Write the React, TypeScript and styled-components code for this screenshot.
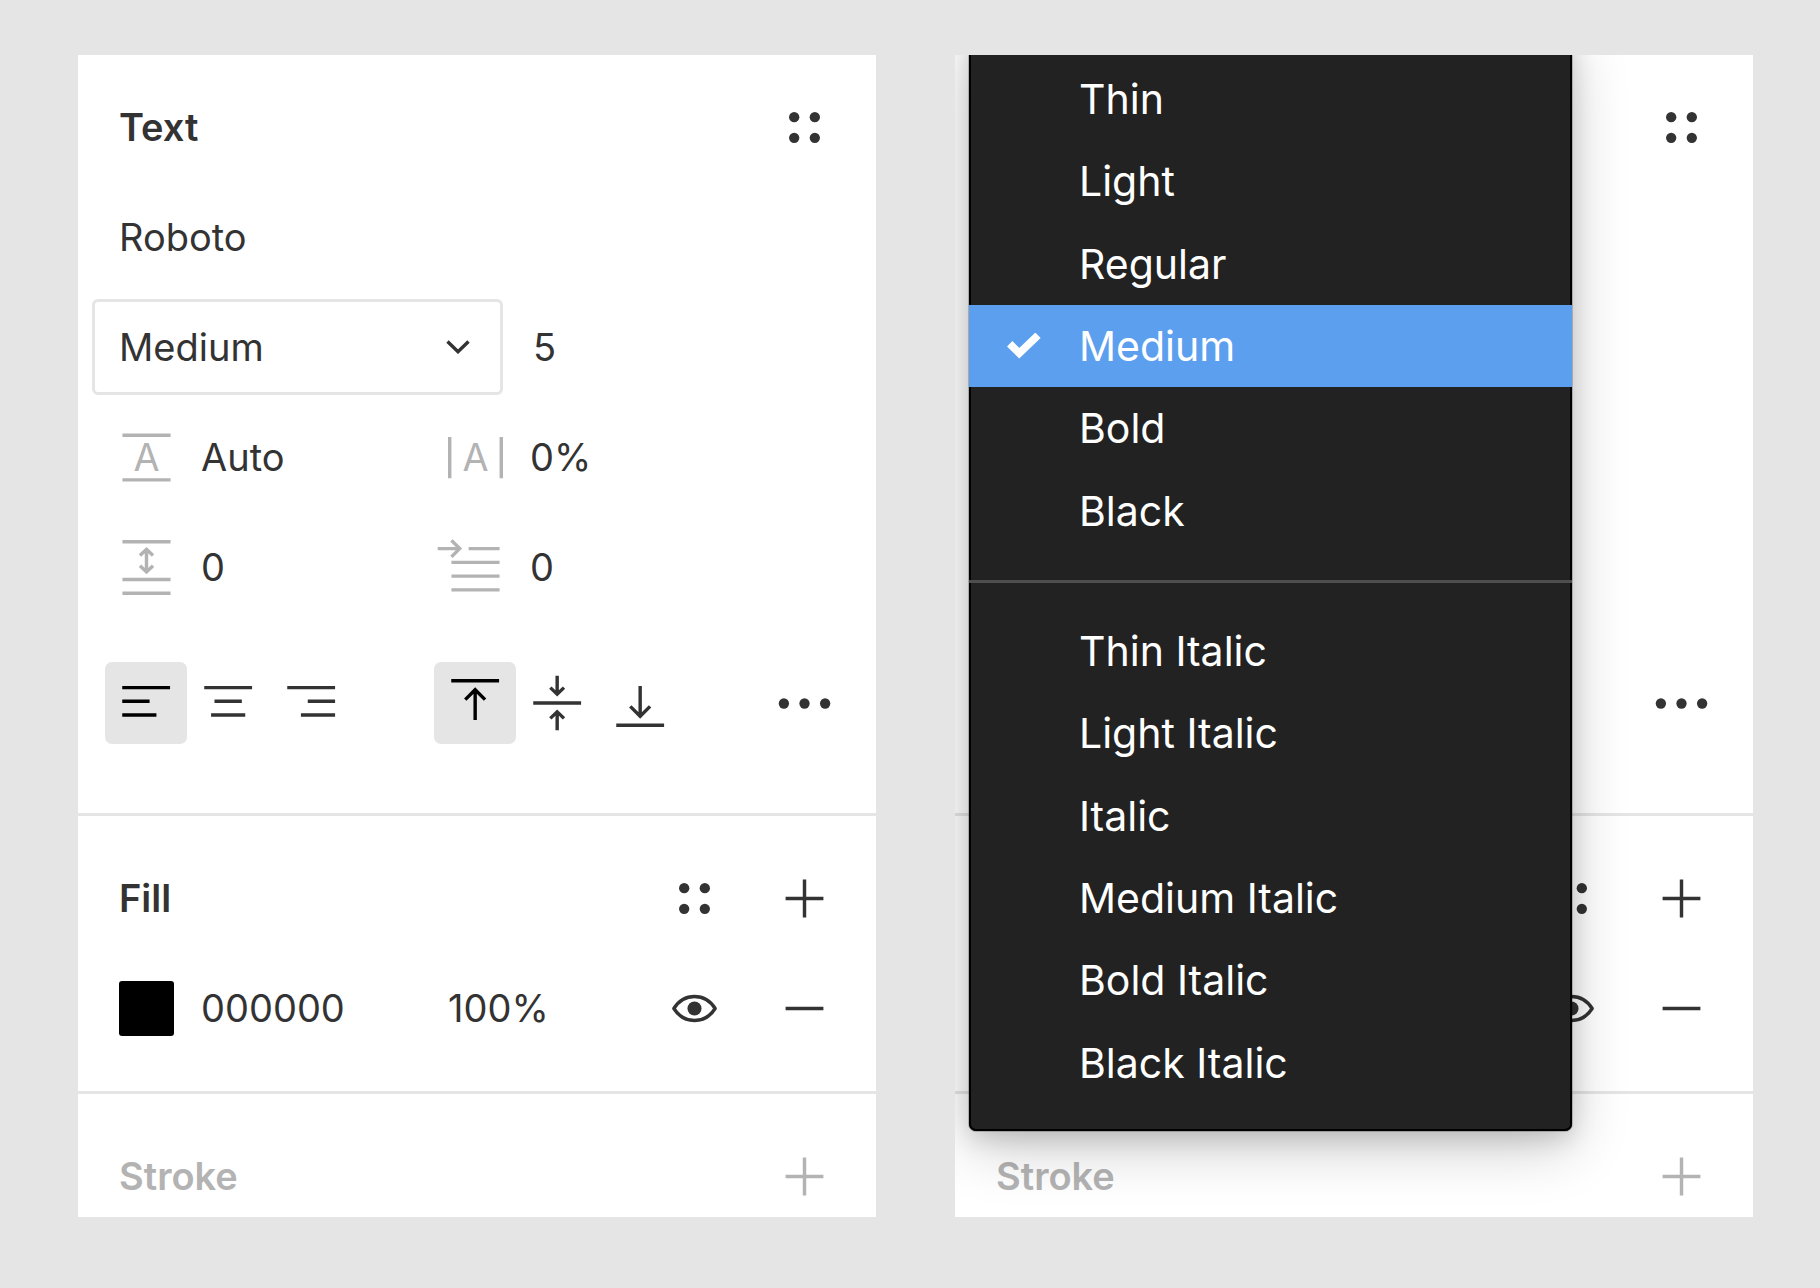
import React from "react";
import styled, { createGlobalStyle, css } from "styled-components";

const ink = "#333333";
const muted = "#b3b3b3";
const line = "#e5e5e5";

const GlobalStyle = createGlobalStyle`
  *, *::before, *::after { box-sizing: border-box; }
  body {
    margin: 0;
    background: ${line};
    color: ${ink};
    font-family: Inter, "Liberation Sans", sans-serif;
    font-size: 38px;
    line-height: 56px;
  }
  button, input, select { font: inherit; color: inherit; }
`;

const Board = styled.main`
  display: grid;
  grid-template-columns: repeat(2, minmax(0, 1fr));
  align-items: start;
  gap: 79px;
  padding: 55px 67px 71px 78px;
`;

const Panel = styled.section`
  position: relative;
  overflow: hidden;
  background: #ffffff;
`;

const Section = styled.div<{ $first?: boolean; $last?: boolean }>`
  padding: ${(p) => (p.$first ? 17 : 27)}px 17px ${(p) => (p.$first ? 55 : 28)}px 41px;
  border-bottom: 3px solid ${line};
  ${(p) =>
    p.$last &&
    css`
      padding-top: 54px;
      padding-bottom: 13px;
      border-bottom: 0;
    `}
`;

const Header = styled.header<{ $compact?: boolean }>`
  display: flex;
  align-items: center;
  height: ${(p) => (p.$compact ? 56 : 110)}px;
`;

const Title = styled.h2<{ $muted?: boolean }>`
  flex: 1;
  margin: 0;
  font-size: 38px;
  font-weight: 600;
  line-height: 56px;
  color: ${(p) => (p.$muted ? muted : ink)};
`;

const Row = styled.div`
  display: flex;
  align-items: center;
  height: 110px;
`;

const FieldRow = styled.div<{ $spaced?: boolean }>`
  display: grid;
  grid-template-columns: 329px minmax(0, 1fr) auto;
  align-items: center;
  height: 110px;
  margin-top: ${(p) => (p.$spaced ? 26 : 0)}px;
`;

const Field = styled.label`
  display: flex;
  align-items: center;
  gap: 27px;
  min-width: 0;
`;

const TextInput = styled.input`
  flex: 1;
  width: 100%;
  min-width: 0;
  height: 56px;
  padding: 0;
  border: 0;
  background: transparent;
  outline: none;
`;

const SelectBox = styled.div`
  display: grid;
  align-items: center;
  flex: 0 0 411px;
  margin-left: -27px;
  margin-right: 30px;

  & > * {
    grid-area: 1 / 1;
  }
`;

const Select = styled.select`
  appearance: none;
  width: 100%;
  height: 96px;
  padding: 0 72px 0 24px;
  border: 3px solid ${line};
  border-radius: 6px;
  background: #ffffff;
  outline: none;
`;

const Chevron = styled.svg`
  justify-self: end;
  width: 24px;
  height: 14px;
  margin-right: 33px;
  pointer-events: none;
`;

const IconButton = styled.button<{ $muted?: boolean }>`
  display: flex;
  flex: none;
  align-items: center;
  justify-content: center;
  width: 110px;
  height: 56px;
  padding: 0;
  border: 0;
  background: transparent;
  color: ${(p) => (p.$muted ? muted : ink)};
`;

const Actions = styled.div`
  display: flex;
`;

const Glyph = styled.svg<{ $muted?: boolean }>`
  flex: none;
  display: block;
  width: 55px;
  height: 55px;
  overflow: visible;
  color: ${(p) => (p.$muted ? muted : "inherit")};
`;

const ToggleGroup = styled.div`
  display: grid;
  grid-template-columns: repeat(3, 1fr);
  width: 247px;
  margin-left: -14px;
`;

const Toggle = styled.button<{ $on?: boolean }>`
  height: 82px;
  padding: 0;
  border: 0;
  border-radius: 7px;
  background: ${(p) => (p.$on ? line : "transparent")};
  color: ${(p) => (p.$on ? "#000000" : ink)};

  svg {
    display: block;
    width: 100%;
    height: 100%;
  }
`;

const Swatch = styled.button`
  flex: none;
  width: 55px;
  height: 55px;
  padding: 0;
  border: 0;
  border-radius: 3px;
  background: #000000;
`;

const Menu = styled.div`
  position: absolute;
  top: -24px;
  left: 14px;
  width: 603px;
  padding: 27px 0;
  border-radius: 7px;
  background: #222222;
  color: #ffffff;
  font-size: 41px;
  box-shadow:
    inset 0 0 0 2px #000000,
    0 0 0 1px rgba(0, 0, 0, 0.2),
    0 7px 24px rgba(0, 0, 0, 0.15),
    0 17px 58px rgba(0, 0, 0, 0.2);
`;

const MenuGroup = styled.div`
  display: grid;
  grid-template-rows: repeat(6, 1fr);
  height: 494px;
`;

const MenuItem = styled.button<{ $on?: boolean }>`
  display: grid;
  grid-template-columns: 110px 1fr;
  align-items: center;
  padding: 0;
  border: 0;
  background: ${(p) => (p.$on ? "#5c9fee" : "transparent")};
  text-align: left;
`;

const MenuLabel = styled.span`
  grid-column: 2;
`;

const Check = styled.svg`
  justify-self: center;
  width: 34px;
  height: 26px;
`;

const Separator = styled.hr`
  height: 3px;
  margin: 28px 0 27px;
  border: 0;
  background: #4e4e4e;
`;

function DotGrid() {
  return (
    <Glyph viewBox="0 0 16 16" fill="currentColor" aria-hidden="true">
      <circle cx="5" cy="5" r="1.5" />
      <circle cx="11" cy="5" r="1.5" />
      <circle cx="5" cy="11" r="1.5" />
      <circle cx="11" cy="11" r="1.5" />
    </Glyph>
  );
}

function More() {
  return (
    <Glyph viewBox="0 0 16 16" fill="currentColor" aria-hidden="true">
      <circle cx="2" cy="8" r="1.5" />
      <circle cx="8" cy="8" r="1.5" />
      <circle cx="14" cy="8" r="1.5" />
    </Glyph>
  );
}

function Plus() {
  return (
    <Glyph viewBox="0 0 16 16" stroke="currentColor" aria-hidden="true">
      <path d="M2.5 8h11M8 2.5v11" />
    </Glyph>
  );
}

function Minus() {
  return (
    <Glyph viewBox="0 0 16 16" stroke="currentColor" aria-hidden="true">
      <path d="M2.5 8h11" />
    </Glyph>
  );
}

function Eye() {
  return (
    <Glyph viewBox="0 0 16 16" aria-hidden="true">
      <path
        d="M2 8C3.5 5.6 5.6 4.5 8 4.5S12.5 5.6 14 8C12.5 10.4 10.4 11.5 8 11.5S3.5 10.4 2 8Z"
        fill="none"
        stroke="currentColor"
        strokeLinejoin="round"
      />
      <circle cx="8" cy="8" r="2.05" fill="currentColor" />
    </Glyph>
  );
}

function LetterA() {
  return (
    <text x="8" y="12" fontSize="11" textAnchor="middle" fill="currentColor" stroke="none">
      A
    </text>
  );
}

function LineHeightIcon() {
  return (
    <Glyph $muted viewBox="0 0 16 16" stroke="currentColor" aria-hidden="true">
      <path d="M1 1.5h14M1 14.5h14" />
      <LetterA />
    </Glyph>
  );
}

function LetterSpacingIcon() {
  return (
    <Glyph $muted viewBox="0 0 16 16" stroke="currentColor" aria-hidden="true">
      <path d="M.5 2v12M15.5 2v12" />
      <LetterA />
    </Glyph>
  );
}

function ParagraphSpacingIcon() {
  return (
    <Glyph $muted viewBox="0 0 16 16" fill="none" stroke="currentColor" aria-hidden="true">
      <path d="M1 .5h14M1 11.5h14M1 15.5h14M8 2.8v6.4M6.1 4.5 8 2.7l1.9 1.8M6.1 7.5 8 9.3l1.9-1.8" />
    </Glyph>
  );
}

function IndentIcon() {
  return (
    <Glyph $muted viewBox="0 0 16 16" fill="none" stroke="currentColor" aria-hidden="true">
      <path d="M-3 2.5H3.2M1 .1l2.4 2.4L1 4.9M6 2.5h9M1 6.5h14M1 10.5h14M1 14.5h14" />
    </Glyph>
  );
}

const alignPaths = [
  { label: "Align left", d: "M5 7.5h14M5 11.5h8M5 15.5h10" },
  { label: "Align center", d: "M5 7.5h14M8 11.5h8M7 15.5h10" },
  { label: "Align right", d: "M5 7.5h14M11 11.5h8M9 15.5h10" },
];

const verticalPaths = [
  { label: "Align top", d: "M5 5.5h14M12 17V8.2M9.1 11 12 8.1l2.9 2.9" },
  {
    label: "Align middle",
    d: "M5 12h14M12 4v5.4M10 7.5l2 1.9 2-1.9M12 20v-5.4M10 16.5l2-1.9 2 1.9",
  },
  { label: "Align bottom", d: "M5 18.5h14M12 7v8.8M9.1 13 12 15.9l2.9-2.9" },
];

function Toggles({ label, items }: { label: string; items: { label: string; d: string }[] }) {
  return (
    <ToggleGroup role="group" aria-label={label}>
      {items.map((item, i) => (
        <Toggle key={item.label} type="button" $on={i === 0} aria-pressed={i === 0} aria-label={item.label}>
          <svg viewBox="0 0 24 24" fill="none" stroke="currentColor" aria-hidden="true">
            <path d={item.d} />
          </svg>
        </Toggle>
      ))}
    </ToggleGroup>
  );
}

const uprightStyles = ["Thin", "Light", "Regular", "Medium", "Bold", "Black"];
const italicStyles = ["Thin Italic", "Light Italic", "Italic", "Medium Italic", "Bold Italic", "Black Italic"];

function StyleItems({ names }: { names: string[] }) {
  return (
    <MenuGroup role="group">
      {names.map((name) => {
        const on = name === "Medium";
        return (
          <MenuItem key={name} type="button" role="menuitemradio" aria-checked={on} $on={on}>
            {on && (
              <Check viewBox="0 0 34 26" fill="none" stroke="currentColor" strokeWidth="7.6" aria-hidden="true">
                <path d="M2.7 10.7 12.3 20.3 31 2.3" />
              </Check>
            )}
            <MenuLabel>{name}</MenuLabel>
          </MenuItem>
        );
      })}
    </MenuGroup>
  );
}

function StyleMenu() {
  return (
    <Menu role="menu" aria-label="Font style">
      <StyleItems names={uprightStyles} />
      <Separator />
      <StyleItems names={italicStyles} />
    </Menu>
  );
}

function PropertiesPanel({ menuOpen }: { menuOpen?: boolean }) {
  return (
    <Panel>
      <Section $first>
        <Header>
          <Title>Text</Title>
          <IconButton type="button" aria-label="Text styles">
            <DotGrid />
          </IconButton>
        </Header>
        <Row>
          <TextInput aria-label="Font family" defaultValue="Roboto" />
        </Row>
        <Row>
          <SelectBox>
            <Select aria-label="Font style" defaultValue="Medium">
              {[...uprightStyles, ...italicStyles].map((name) => (
                <option key={name}>{name}</option>
              ))}
            </Select>
            <Chevron viewBox="0 0 24 14" fill="none" stroke="currentColor" strokeWidth="3.4" aria-hidden="true">
              <path d="M1.5 1.5 12 11.7 22.5 1.5" />
            </Chevron>
          </SelectBox>
          <TextInput aria-label="Font size" defaultValue="5" />
        </Row>
        <FieldRow>
          <Field>
            <LineHeightIcon />
            <TextInput aria-label="Line height" defaultValue="Auto" />
          </Field>
          <Field>
            <LetterSpacingIcon />
            <TextInput aria-label="Letter spacing" defaultValue="0%" />
          </Field>
        </FieldRow>
        <FieldRow>
          <Field>
            <ParagraphSpacingIcon />
            <TextInput aria-label="Paragraph spacing" defaultValue="0" />
          </Field>
          <Field>
            <IndentIcon />
            <TextInput aria-label="Paragraph indent" defaultValue="0" />
          </Field>
        </FieldRow>
        <FieldRow $spaced>
          <Toggles label="Horizontal alignment" items={alignPaths} />
          <Toggles label="Vertical alignment" items={verticalPaths} />
          <IconButton type="button" aria-label="More text options">
            <More />
          </IconButton>
        </FieldRow>
      </Section>

      <Section>
        <Header>
          <Title>Fill</Title>
          <IconButton type="button" aria-label="Color styles">
            <DotGrid />
          </IconButton>
          <IconButton type="button" aria-label="Add fill">
            <Plus />
          </IconButton>
        </Header>
        <FieldRow>
          <Field as="div">
            <Swatch type="button" aria-label="Pick fill color" />
            <TextInput aria-label="Fill color" defaultValue="000000" />
          </Field>
          <TextInput aria-label="Fill opacity" defaultValue="100%" />
          <Actions>
            <IconButton type="button" aria-label="Toggle fill visibility">
              <Eye />
            </IconButton>
            <IconButton type="button" aria-label="Remove fill">
              <Minus />
            </IconButton>
          </Actions>
        </FieldRow>
      </Section>

      <Section $last>
        <Header $compact>
          <Title $muted>Stroke</Title>
          <IconButton type="button" $muted aria-label="Add stroke">
            <Plus />
          </IconButton>
        </Header>
      </Section>

      {menuOpen && <StyleMenu />}
    </Panel>
  );
}

export default function App() {
  return (
    <>
      <GlobalStyle />
      <Board>
        <PropertiesPanel />
        <PropertiesPanel menuOpen />
      </Board>
    </>
  );
}
